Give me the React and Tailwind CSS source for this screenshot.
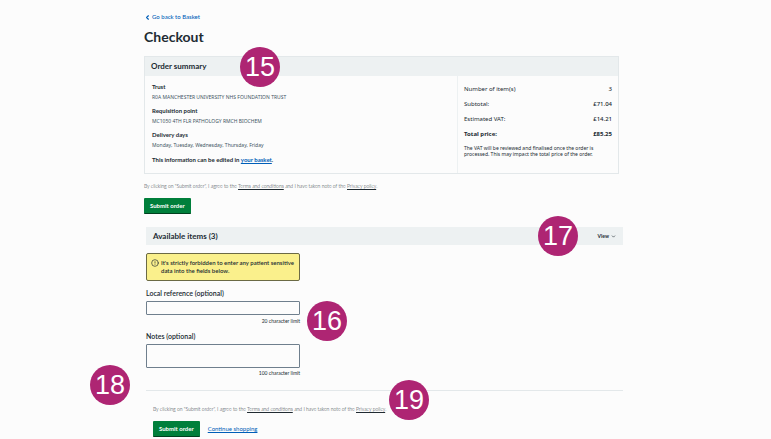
import React, { useState } from 'react';
import { ChevronDown, ChevronLeft, CircleAlert } from 'lucide-react';

const details = [
  { label: 'Trust', value: 'R0A MANCHESTER UNIVERSITY NHS FOUNDATION TRUST' },
  { label: 'Requisition point', value: 'MC1050 4TH FLR PATHOLOGY RMCH BIOCHEM' },
  { label: 'Delivery days', value: 'Monday, Tuesday, Wednesday, Thursday, Friday' },
];

const totals = [
  { label: 'Number of item(s)', value: '3' },
  { label: 'Subtotal:', value: '£71.04' },
  { label: 'Estimated VAT:', value: '£14.21' },
];

// Numbered guide marker that sits over the page
function Marker({ number, className }) {
  return (
    <span
      className={`absolute flex size-10 items-center justify-center rounded-full bg-[#ae2573] font-['Liberation_Sans',sans-serif] text-[27px] leading-none text-white ${className}`}
    >
      {number}
    </span>
  );
}

function Terms() {
  return (
    <p className="text-[5px] leading-[8px] font-light text-[#212b32]">
      By clicking on "Submit order", I agree to the{' '}
      <a href="#terms" className="underline">Terms and conditions</a> and I have taken note of the{' '}
      <a href="#privacy" className="underline">Privacy policy</a>.
    </p>
  );
}

function SubmitButton() {
  return (
    <button
      type="submit"
      className="rounded-[1px] border-b border-[#00401e] bg-[#007f3b] px-1.5 text-[6px] leading-[15px] font-bold text-white"
    >
      Submit order
    </button>
  );
}

function OrderSummary() {
  return (
    <section className="relative mt-2 border border-[#e3e8ea]">
      <h2 className="bg-[#edf1f2] px-1.5 text-[8px] leading-[19px] font-bold">Order summary</h2>
      <div className="flex">
        <div className="flex flex-1 flex-col gap-[3px] px-[7px] pt-1.5 pb-2">
          {details.map((d) => (
            <div key={d.label}>
              <h3 className="text-[6px] leading-[10px] font-bold">{d.label}</h3>
              <p className="font-['Noto_Sans',sans-serif] text-[5px] leading-[11px] text-[#425563]">{d.value}</p>
            </div>
          ))}
          <p className="text-[6px] leading-[11px] font-bold">
            This information can be edited in <a href="#basket" className="text-[#005eb8] underline">your basket</a>.
          </p>
        </div>
        <div className="w-[161px] border-l border-[#edf1f2] px-1.5 pt-1.5">
          <dl className="font-['Noto_Sans',sans-serif] text-[6px] leading-[15px]">
            {totals.map((t) => (
              <div key={t.label} className="flex justify-between">
                <dt>{t.label}</dt>
                <dd className="font-medium">{t.value}</dd>
              </div>
            ))}
            <div className="flex justify-between font-bold">
              <dt>Total price:</dt>
              <dd>£85.25</dd>
            </div>
          </dl>
          <p className="mt-[3px] font-['Noto_Sans',sans-serif] text-[5px] leading-[6px]">
            The VAT will be reviewed and finalised once the order is processed. This may impact the total price of the
            order.
          </p>
        </div>
      </div>
      <Marker number={15} className="-top-2.5 left-[95px]" />
    </section>
  );
}

function ItemDetails() {
  const [reference, setReference] = useState('');
  const [notes, setNotes] = useState('');

  return (
    <div className="relative w-[154px]">
      <div className="mt-2 flex gap-0.5 rounded-[2px] border border-[#6b6a45] bg-[#faf08c] py-[5px] pr-0.5 pl-1">
        <CircleAlert className="size-2 shrink-0" strokeWidth={2} />
        <p className="text-[6px] leading-[8px] font-semibold">
          It's strictly forbidden to enter any patient sensitive data into the fields below.
        </p>
      </div>

      <label htmlFor="reference" className="mt-[7px] block text-[7px] leading-[10px] font-semibold">
        Local reference (optional)
      </label>
      <input
        id="reference"
        type="text"
        maxLength={20}
        value={reference}
        onChange={(e) => setReference(e.target.value)}
        className="mt-[3px] block h-3.5 w-full rounded-[1px] border border-[#6f7f8d] px-1 text-[6px]"
      />
      <p className="mt-px text-right text-[5px] leading-[10px]">20 character limit</p>

      <label htmlFor="notes" className="mt-[5px] block text-[7px] leading-[10px] font-semibold">
        Notes (optional)
      </label>
      <textarea
        id="notes"
        maxLength={100}
        value={notes}
        onChange={(e) => setNotes(e.target.value)}
        className="mt-[3px] block h-6 w-full resize-none rounded-[1px] border border-[#6f7f8d] px-1 text-[6px]"
      />
      <p className="text-right text-[5px] leading-[10px]">100 character limit</p>

      <Marker number={16} className="top-12 left-[161px]" />
    </div>
  );
}

export default function App() {
  const [open, setOpen] = useState(true);

  return (
    <div className="min-h-screen bg-[#fcfcfc] font-['Lato','Open_Sans',sans-serif] text-[#212b32]">
      <main className="pt-3 pr-[148px] pl-36">
        <div className="pr-1">
          <a href="#basket" className="flex items-center gap-px text-[6px] leading-[10px] font-medium text-[#005eb8]">
            <ChevronLeft className="size-[7px]" strokeWidth={4} /> Go back to Basket
          </a>
          <h1 className="mt-1 text-[14px] leading-[22px] font-bold">Checkout</h1>
          <OrderSummary />
          <div className="mt-2">
            <Terms />
          </div>
          <div className="mt-2 flex">
            <SubmitButton />
          </div>
        </div>

        <section className="relative mt-[13px] ml-0.5">
          <div className="flex items-center justify-between bg-[#edf1f2] px-[7px] leading-[18px]">
            <h2 className="text-[8px] font-bold">Available items (3)</h2>
            <button type="button" onClick={() => setOpen(!open)} className="flex items-center gap-0.5 text-[5px] font-bold">
              View <ChevronDown className="size-[5px]" strokeWidth={3} />
            </button>
          </div>
          <Marker number={17} className="-top-[11px] right-[45px]" />
          {open && <ItemDetails />}
        </section>

        <footer className="relative mt-3 ml-0.5 border-t border-[#e3e8ea] px-[7px] pt-3.5">
          <Terms />
          <div className="mt-2 flex items-center gap-2">
            <SubmitButton />
            <a href="#shop" className="text-[6px] leading-[10px] text-[#005eb8] underline">Continue shopping</a>
          </div>
          <Marker number={18} className="-top-[26px] -left-14" />
          <Marker number={19} className="-top-[11px] left-[243px]" />
        </footer>
      </main>
    </div>
  );
}
